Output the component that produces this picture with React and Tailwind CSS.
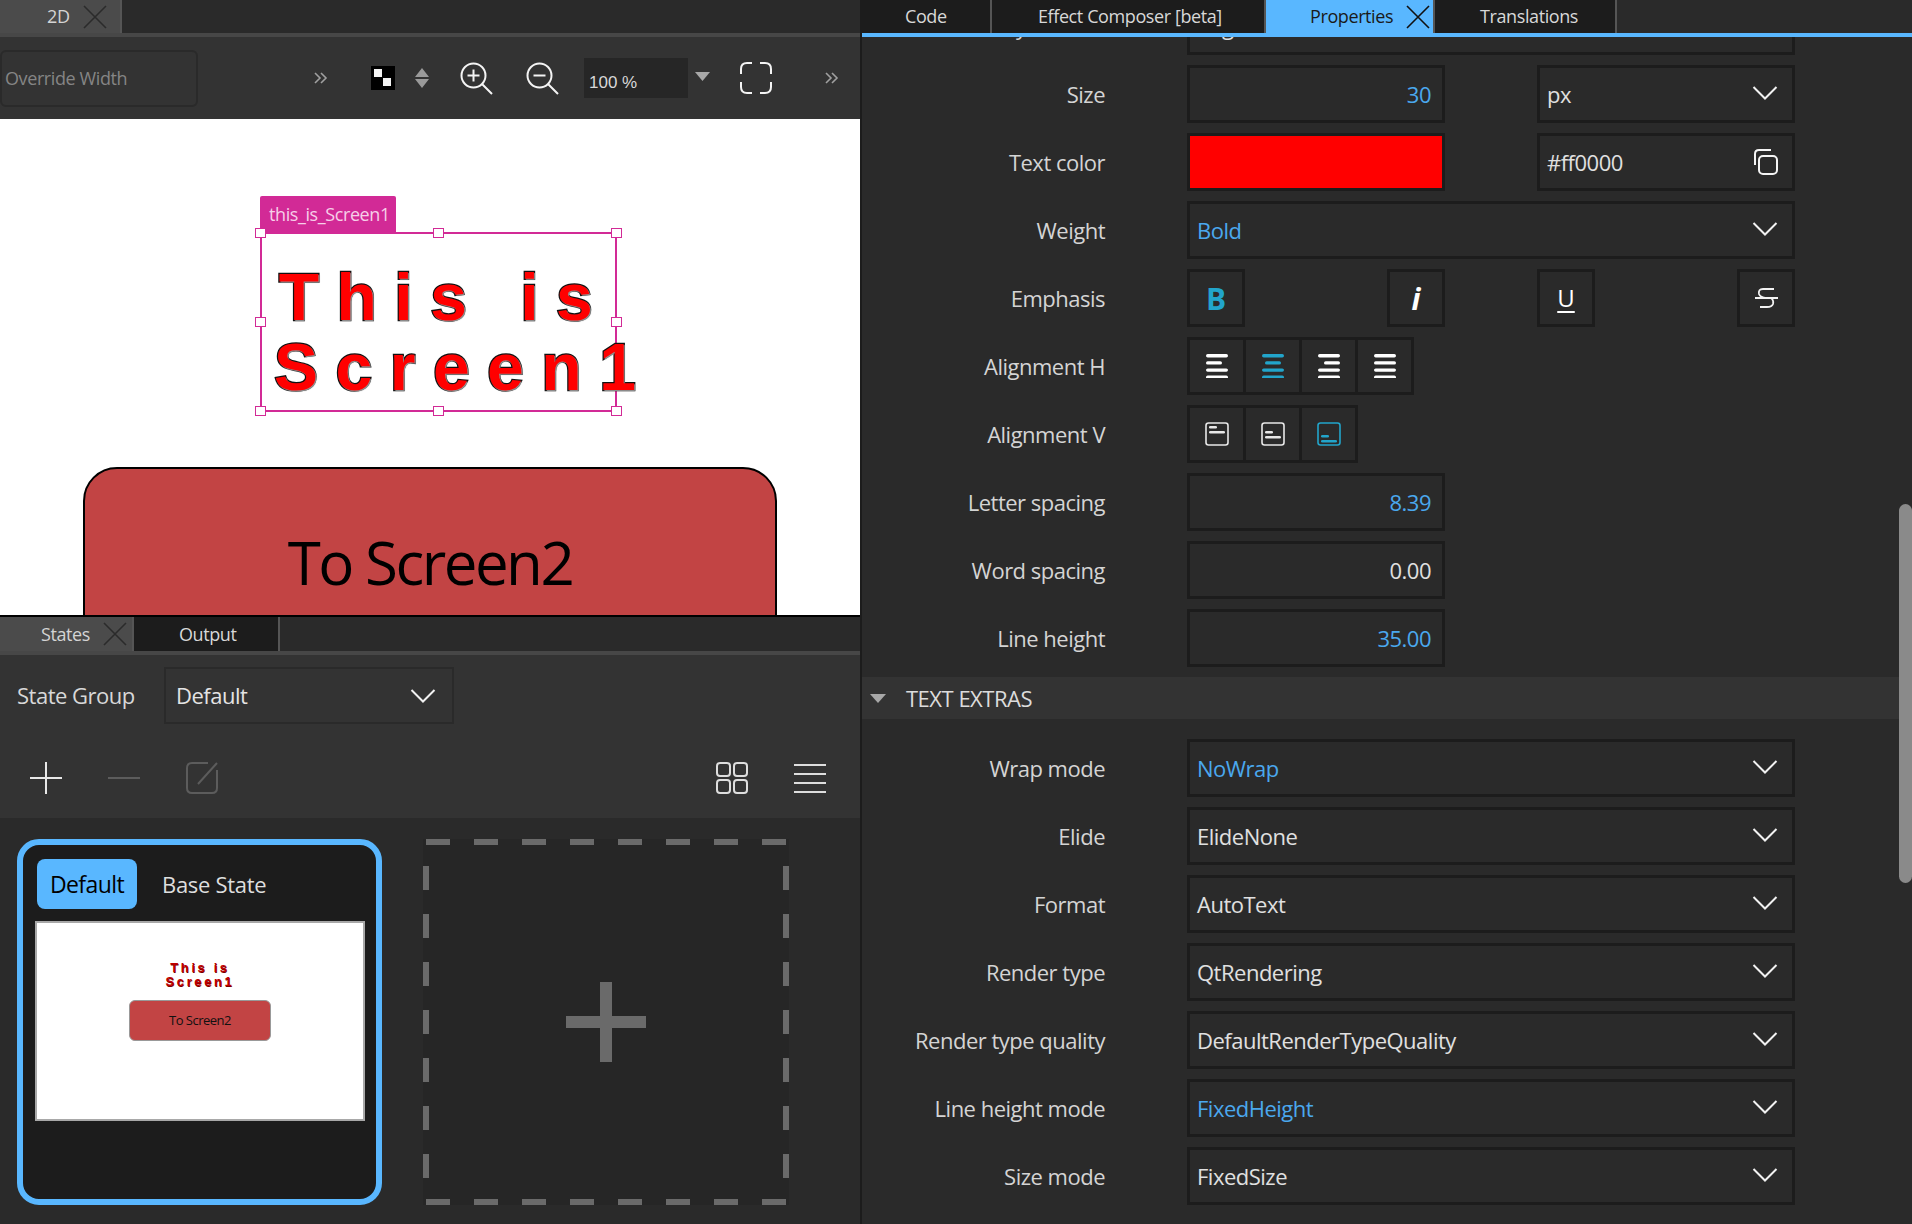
import { ChevronDown } from 'lucide-react';

const UI_FONT = "font-['Open_Sans',sans-serif]";

const CloseX = ({ className = 'text-[#2b2b2b]' }) => (
  <svg width="24" height="24" viewBox="0 0 24 24" fill="none" stroke="currentColor" strokeWidth="1.6" className={className}>
    <path d="M1 1 L23 23 M23 1 L1 23" />
  </svg>
);

const Chevron = () => (
  <svg width="26" height="14" viewBox="0 0 26 14" fill="none" stroke="#f2f2f2" strokeWidth="2">
    <path d="M1.5 1 L13 12.5 L24.5 1" />
  </svg>
);

const DoubleChevron = () => (
  <svg width="14" height="12" viewBox="0 0 14 12" fill="none" stroke="#a0a0a0" strokeWidth="1.6">
    <path d="M1 1 L6 6 L1 11 M7 1 L12 6 L7 11" />
  </svg>
);

const Tab = ({ label, width, pl, active, light, close }) => (
  <div
    className={`flex h-full shrink-0 items-center border-r-2 border-[#555] text-[18px] ${
      active ? 'border-r-0 bg-[#59b7ff] text-[#1a1a1a]' : light ? 'border-r-0 bg-[#4b4b4b] text-[#d4d4d4]' : 'bg-[#1c1c1c] text-[#d8d8d8]'
    }`}
    style={{ width, paddingLeft: pl }}
  >
    <span className="tracking-[-0.4px]">{label}</span>
    {close && (
      <span className="ml-[13px]">
        <CloseX className={active ? 'text-[#111]' : 'text-[#2b2b2b]'} />
      </span>
    )}
  </div>
);

const ZoomIcon = ({ plus }) => (
  <svg width="33" height="33" viewBox="0 0 33 33" fill="none" stroke="#f4f4f4" strokeWidth="2">
    <circle cx="13.5" cy="13.5" r="12" />
    <path d="M22 22 L32 32 M7.5 13.5 H19.5" />
    {plus && <path d="M13.5 7.5 V19.5" />}
  </svg>
);

const CanvasToolbar = () => (
  <div className="flex h-[82px] items-center bg-[#333333]">
    <div className="flex h-[57px] w-[198px] items-center rounded-[6px] border-2 border-[#2a2a2a] pl-[3px] text-[18px] tracking-[-0.4px] text-[#858585]">
      Override Width
    </div>
    <div className="ml-[116px]">
      <DoubleChevron />
    </div>
    <div className="ml-[43px] flex h-[24px] w-[24px] items-start bg-black p-[3px]">
      <svg width="18" height="18" viewBox="0 0 18 18" fill="#f4f4f4">
        <rect x="0" y="0" width="8" height="8" />
        <rect x="9" y="9" width="8" height="8" />
      </svg>
    </div>
    <div className="ml-[20px]">
      <svg width="14" height="20" viewBox="0 0 14 20" fill="#9a9a9a">
        <path d="M7 0 L14 9 H0 Z M0 11 H14 L7 20 Z" />
      </svg>
    </div>
    <div className="ml-[31px]">
      <ZoomIcon plus />
    </div>
    <div className="ml-[33px]">
      <ZoomIcon />
    </div>
    <div className="ml-[25px] flex h-[40px] w-[104px] items-end bg-[#262626] pb-[3px] pl-[5px] font-['Liberation_Sans',sans-serif] text-[17px] text-[#d8d8d8]">
      100 %
    </div>
    <div className="ml-[7px]">
      <svg width="15" height="9" viewBox="0 0 15 9" fill="#a8a8a8" className="-mt-[4px]">
        <path d="M0 0 H15 L7.5 9 Z" />
      </svg>
    </div>
    <div className="ml-[30px]">
      <svg width="32" height="32" viewBox="0 0 32 32" fill="none" stroke="#f4f4f4" strokeWidth="2">
        <path d="M1 12 V7 Q1 1 7 1 H12 M20 1 H25 Q31 1 31 7 V12 M31 20 V25 Q31 31 25 31 H20 M12 31 H7 Q1 31 1 25 V20" />
      </svg>
    </div>
    <div className="ml-[53px]">
      <DoubleChevron />
    </div>
  </div>
);

const Handle = ({ className }) => (
  <div className={`absolute h-[10px] w-[11px] border border-[#d22a96] bg-white ${className}`} />
);

const DesignCanvas = () => (
  <div className="relative h-[496px] overflow-hidden bg-white">
    <div className="absolute left-[260px] top-[77px] flex h-[36px] w-[136px] items-center rounded-t-[2px] bg-[#d22a96] pl-[9px] text-[18px] tracking-[-0.4px] text-[#f6cfe8]">
      this_is_Screen1
    </div>
    <div className="absolute left-[260px] top-[113px] h-[180px] w-[357px] border-2 border-[#d22a96]">
      <div className="pt-[30px] text-center font-['Liberation_Sans',sans-serif] text-[66px] font-bold leading-[70px] tracking-[17.5px] text-[#ff0000] [-webkit-text-stroke:2.5px_#111] [paint-order:stroke_fill] [text-shadow:1px_1px_1px_#999]">
        <div className="-mt-[2px] pl-[12px]">This is</div>
        <div className="pl-[12px]">Screen1</div>
      </div>
      <Handle className="-left-[7px] -top-[6px]" />
      <Handle className="left-[171px] -top-[6px]" />
      <Handle className="-right-[7px] -top-[6px]" />
      <Handle className="-left-[7px] top-[83px]" />
      <Handle className="-right-[7px] top-[83px]" />
      <Handle className="-left-[7px] -bottom-[6px]" />
      <Handle className="left-[171px] -bottom-[6px]" />
      <Handle className="-right-[7px] -bottom-[6px]" />
    </div>
    <div className="absolute left-[83px] top-[348px] flex h-[200px] w-[694px] justify-center rounded-t-[34px] border-2 border-black bg-[#c24444] pt-[53px] text-[60px] leading-[80px] tracking-[-2.5px] text-black">
      To Screen2
    </div>
  </div>
);

const StatesPanel = () => (
  <div className="h-[163px] bg-[#333333]">
    <div className="flex items-center pl-[17px] pt-[12px]">
      <span className="w-[147px] text-[22px] tracking-[-0.5px] text-[#d8d8d8]">State Group</span>
      <div className="flex h-[57px] w-[290px] items-center justify-between border-2 border-[#2a2a2a] pl-[10px] pr-[16px] text-[22px] tracking-[-0.5px] text-[#e4e4e4]">
        Default
        <Chevron />
      </div>
    </div>
    <div className="flex items-center pl-[30px] pr-[34px] pt-[38px]">
      <svg width="32" height="32" viewBox="0 0 32 32" stroke="#e8e8e8" strokeWidth="2">
        <path d="M0 16 H32 M16 0 V32" />
      </svg>
      <svg width="32" height="32" viewBox="0 0 32 32" stroke="#5c5c5c" strokeWidth="2" className="ml-[46px]">
        <path d="M0 16 H32" />
      </svg>
      <svg width="32" height="32" viewBox="0 0 32 32" fill="none" stroke="#5c5c5c" strokeWidth="2" className="ml-[46px]">
        <path d="M22 1 H6 Q1 1 1 6 V26 Q1 31 6 31 H26 Q31 31 31 26 V8 M31 1 L12 22" />
      </svg>
      <svg width="32" height="32" viewBox="0 0 32 32" fill="none" stroke="#dedede" strokeWidth="2" className="ml-auto">
        <rect x="1" y="1" width="13" height="13" rx="3" />
        <rect x="18" y="1" width="13" height="13" rx="3" />
        <rect x="1" y="18" width="13" height="13" rx="3" />
        <rect x="18" y="18" width="13" height="13" rx="3" />
      </svg>
      <svg width="32" height="32" viewBox="0 0 32 32" stroke="#dedede" strokeWidth="2" className="ml-[46px]">
        <path d="M0 3 H32 M0 12 H32 M0 21 H32 M0 30 H32" />
      </svg>
    </div>
  </div>
);

const StateCards = () => (
  <div className="flex flex-1 items-start gap-[41px] bg-[#2a2a2a] pl-[17px] pt-[21px]">
    <div className="h-[366px] w-[365px] rounded-[22px] border-[6px] border-[#59b7ff] bg-[#1c1c1c] px-[12px] pt-[14px]">
      <div className="flex items-center">
        <div className="ml-[2px] flex h-[50px] w-[100px] items-center justify-center rounded-[8px] bg-[#59b7ff] text-[23px] tracking-[-0.6px] text-black">
          Default
        </div>
        <span className="ml-[25px] text-[22px] tracking-[-0.3px] text-[#dedede]">Base State</span>
      </div>
      <div className="mt-[12px] flex h-[200px] w-[330px] flex-col items-center border-2 border-[#a8a8a8] bg-white pt-[38px]">
        <div className="text-center font-['Liberation_Sans',sans-serif] text-[13px] font-bold leading-[14px] tracking-[2.6px] text-[#c00000] [text-shadow:0.5px_0.5px_0_#700]">
          This is
          <br />
          Screen1
        </div>
        <div className="mt-[11px] flex h-[41px] w-[142px] items-center justify-center rounded-[6px] border border-[#999] bg-[#c24444] text-[13px] tracking-[-0.5px] text-[#111]">
          To Screen2
        </div>
      </div>
    </div>
    <div className="relative flex h-[366px] w-[366px] items-center justify-center bg-[#262626]">
      <svg width="366" height="366" viewBox="0 0 366 366" fill="none" className="absolute inset-0">
        <rect x="3" y="3" width="360" height="360" stroke="#6a6a6a" strokeWidth="6" strokeDasharray="24 24" />
      </svg>
      <svg width="80" height="80" viewBox="0 0 80 80" fill="#6a6a6a">
        <path d="M34 0 H46 V34 H80 V46 H46 V80 H34 V46 H0 V34 H34 Z" />
      </svg>
    </div>
  </div>
);

const Field = ({ children, width = 608, right, blue, className = '' }) => (
  <div
    className={`flex h-[58px] shrink-0 items-center border-[3px] border-[#1c1c1c] bg-[#2a2a2a] text-[22px] tracking-[-0.5px] ${
      right ? 'justify-end pr-[11px]' : 'pl-[7px]'
    } ${blue ? 'text-[#4aa8ee]' : 'text-[#e0e0e0]'} ${className}`}
    style={{ width }}
  >
    {children}
  </div>
);

const SelectField = ({ value, blue, width }) => (
  <Field blue={blue} width={width} className="justify-between pr-[14px]">
    <span>{value}</span>
    <span className="-mt-[3px]">
      <Chevron />
    </span>
  </Field>
);

const Row = ({ label, children }) => (
  <div className="mb-[10px] flex h-[58px]">
    <div className="flex w-[243px] shrink-0 items-center justify-end text-[22px] tracking-[-0.5px] text-[#d4d4d4]">
      {label}
    </div>
    <div className="ml-[82px] flex w-[608px] justify-between">{children}</div>
  </div>
);

const AlignH = ({ kind, color }) => {
  const bars = {
    left: [[0, 22], [0, 16], [0, 22], [0, 22]],
    center: [[0, 22], [3, 16], [0, 22], [0, 22]],
    right: [[0, 22], [6, 16], [0, 22], [0, 22]],
    justify: [[0, 22], [0, 22], [0, 22], [0, 22]],
  }[kind];
  return (
    <svg width="22" height="24" viewBox="0 0 22 24" fill={color}>
      {bars.map(([x, w], i) => (
        <rect key={i} x={x} y={i * 7.2} width={w} height="3.4" rx="1.7" />
      ))}
    </svg>
  );
};

const AlignV = ({ y, color }) => (
  <svg width="24" height="24" viewBox="0 0 24 24" fill="none">
    <rect x="1" y="1" width="22" height="22" rx="2.5" stroke={color} strokeWidth="1.6" />
    <rect x="4" y={y} width="8" height="2.6" rx="1.3" fill={color} />
    <rect x="4" y={y + 5} width="16" height="2.6" rx="1.3" fill={color} />
  </svg>
);

const SegmentGroup = ({ children }) => (
  <div className="flex h-[58px] border-[3px] border-[#1c1c1c]">{children}</div>
);

const Segment = ({ children }) => (
  <div className="flex h-full w-[56px] items-center justify-center border-r-[3px] border-[#1c1c1c] last:w-[53px] last:border-r-0">
    {children}
  </div>
);

const ToggleBox = ({ children }) => (
  <div className="flex h-[58px] w-[58px] items-center justify-center border-[3px] border-[#1c1c1c]">{children}</div>
);

const PropertiesPanel = () => (
  <div className="relative flex-1 overflow-hidden">
    <div className="-mt-[40px]">
      <Row label="Style name">
        <SelectField value="Regular" />
      </Row>
      <Row label="Size">
        <Field width={258} right blue>30</Field>
        <div className="ml-[92px]">
          <SelectField value="px" width={258} />
        </div>
      </Row>
      <Row label="Text color">
        <div className="h-[58px] w-[258px] border-[3px] border-[#1c1c1c] bg-[#ff0000]" />
        <Field width={258} className="justify-between pr-[14px]">
          #ff0000
          <svg width="24" height="26" viewBox="0 0 24 26" fill="none" stroke="#f4f4f4" strokeWidth="2">
            <rect x="5" y="7" width="18" height="18" rx="4" />
            <path d="M1 16 V5 Q1 1 5 1 H17" />
          </svg>
        </Field>
      </Row>
      <Row label="Weight">
        <SelectField value="Bold" blue />
      </Row>
      <Row label="Emphasis">
        <div className="flex w-[258px] justify-between">
          <ToggleBox>
            <span className="text-[30px] font-bold text-[#22a5cb]">B</span>
          </ToggleBox>
          <ToggleBox>
            <span className="text-[30px] font-bold italic text-white">i</span>
          </ToggleBox>
        </div>
        <div className="flex w-[258px] justify-between">
          <ToggleBox>
            <span className="text-[24px] leading-[28px] text-white underline underline-offset-[4px]">U</span>
          </ToggleBox>
          <ToggleBox>
            <svg width="24" height="24" viewBox="0 0 24 24" fill="none" stroke="#f2f2f2" strokeWidth="1.8">
              <path d="M20 3 H9 Q4 3 5 8 Q6 11 11 12 H16 Q20 13 19 18 Q18 21 13 21 H6 M1 12 H24" />
            </svg>
          </ToggleBox>
        </div>
      </Row>
      <Row label="Alignment H">
        <div className="flex w-[608px]">
          <SegmentGroup>
            <Segment><AlignH kind="left" color="#ffffff" /></Segment>
            <Segment><AlignH kind="center" color="#22a5cb" /></Segment>
            <Segment><AlignH kind="right" color="#ffffff" /></Segment>
            <Segment><AlignH kind="justify" color="#ffffff" /></Segment>
          </SegmentGroup>
        </div>
      </Row>
      <Row label="Alignment V">
        <div className="flex w-[608px]">
          <SegmentGroup>
            <Segment><AlignV y={4} color="#e8e8e8" /></Segment>
            <Segment><AlignV y={9} color="#e8e8e8" /></Segment>
            <Segment><AlignV y={13} color="#22a5cb" /></Segment>
          </SegmentGroup>
        </div>
      </Row>
      <Row label="Letter spacing">
        <div className="flex w-[608px]"><Field width={258} right blue>8.39</Field></div>
      </Row>
      <Row label="Word spacing">
        <div className="flex w-[608px]"><Field width={258} right>0.00</Field></div>
      </Row>
      <Row label="Line height">
        <div className="flex w-[608px]"><Field width={258} right blue>35.00</Field></div>
      </Row>
      <div className="mb-[20px] mt-[10px] flex h-[42px] items-center bg-[#333333]">
        <svg width="16" height="9" viewBox="0 0 16 9" fill="#a8a8a8" className="ml-[8px]">
          <path d="M0 0 H16 L8 9 Z" />
        </svg>
        <span className="ml-[20px] text-[22px] tracking-[-0.5px] text-[#dcdcdc]">TEXT EXTRAS</span>
      </div>
      <Row label="Wrap mode"><SelectField value="NoWrap" blue /></Row>
      <Row label="Elide"><SelectField value="ElideNone" /></Row>
      <Row label="Format"><SelectField value="AutoText" /></Row>
      <Row label="Render type"><SelectField value="QtRendering" /></Row>
      <Row label="Render type quality"><SelectField value="DefaultRenderTypeQuality" /></Row>
      <Row label="Line height mode"><SelectField value="FixedHeight" blue /></Row>
      <Row label="Size mode"><SelectField value="FixedSize" /></Row>
    </div>
    <div className="absolute right-0 top-[467px] h-[379px] w-[13px] rounded-b-[7px] rounded-t-[7px] bg-[#8a8a8a]" />
  </div>
);

export default function App() {
  return (
    <div className={`flex h-[1224px] w-[1912px] overflow-hidden bg-[#2a2a2a] ${UI_FONT}`}>
      <div className="flex w-[860px] shrink-0 flex-col">
        <div className="flex h-[33px] bg-[#2a2a2a]">
          <Tab label="2D" width={122} pl={47} light close />
        </div>
        <div className="h-[4px] bg-[#474747]" />
        <CanvasToolbar />
        <DesignCanvas />
        <div className="h-[2px] bg-black" />
        <div className="flex h-[34px] bg-[#2a2a2a]">
          <Tab label="States" width={134} pl={41} light close />
          <Tab label="Output" width={146} pl={45} />
        </div>
        <div className="h-[4px] bg-[#474747]" />
        <StatesPanel />
        <StateCards />
      </div>
      <div className="flex min-w-0 flex-1 flex-col border-l-2 border-[#1c1c1c]">
        <div className="z-10 flex h-[33px] bg-[#2a2a2a]">
          <Tab label="Code" width={130} pl={43} />
          <Tab label="Effect Composer [beta]" width={274} pl={46} />
          <Tab label="Properties" width={169} pl={44} active close />
          <Tab label="Translations" width={182} pl={45} />
        </div>
        <div className="z-10 h-[4px] bg-[#59b7ff]" />
        <PropertiesPanel />
      </div>
    </div>
  );
}
